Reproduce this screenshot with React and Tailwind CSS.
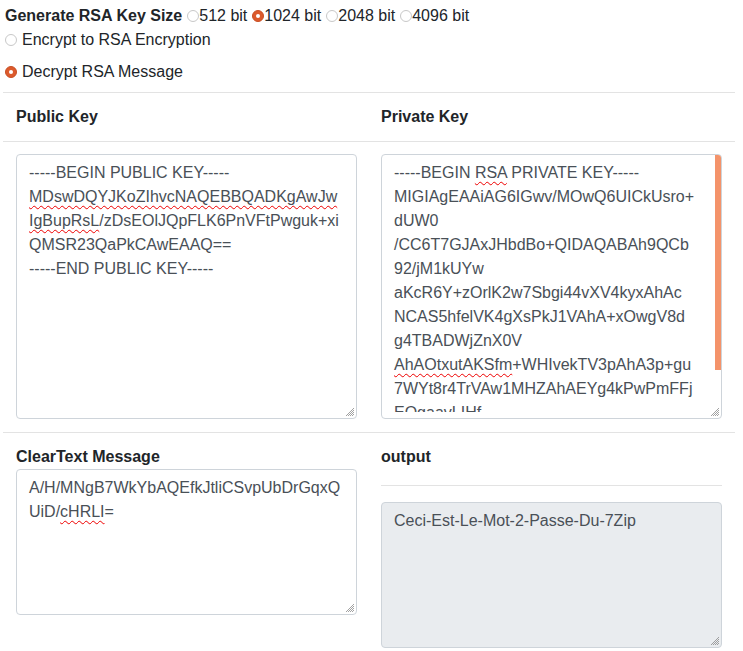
import React from "react";

function Radio({ checked, className = "" }) {
  return checked ? (
    <span className={`inline-flex items-center justify-center w-[12px] h-[12px] rounded-full bg-[#dc5a2c] border border-[#c94f24] shrink-0 ${className}`}>
      <span className="w-[4px] h-[4px] rounded-full bg-white" />
    </span>
  ) : (
    <span className={`inline-block w-[12px] h-[12px] rounded-full bg-white border border-[#c8c8c8] shrink-0 ${className}`} />
  );
}

function Grip() {
  return (
    <svg className="absolute right-[2px] bottom-[2px]" width="9" height="9" viewBox="0 0 9 9">
      <g stroke="#8a8a8a" strokeWidth="0.8">
        <line x1="9" y1="1" x2="1" y2="9" />
        <line x1="9" y1="3" x2="3" y2="9" />
        <line x1="9" y1="5" x2="5" y2="9" />
        <line x1="9" y1="7" x2="7" y2="9" />
      </g>
    </svg>
  );
}

// spellcheck squiggle
function Sq({ children }) {
  return <span className="underline decoration-wavy decoration-[#e00] decoration-1 underline-offset-[3px]">{children}</span>;
}

const privateLines = [
  <>-----BEGIN <Sq>RSA</Sq> PRIVATE KEY-----</>,
  "MIGIAgEAAiAG6IGwv/MOwQ6UICkUsro+",
  "dUW0",
  "/CC6T7GJAxJHbdBo+QIDAQABAh9QCb",
  "92/jM1kUYw",
  "aKcR6Y+zOrlK2w7Sbgi44vXV4kyxAhAc",
  "NCAS5hfelVK4gXsPkJ1VAhA+xOwgV8d",
  "g4TBADWjZnX0V",
  <><Sq>AhAOtxutAKSfm</Sq>+WHIvekTV3pAhA3p+gu</>,
  "7WYt8r4TrVAw1MHZAhAEYg4kPwPmFFj",
  "EOgaavLIHf",
  "-----END RSA PRIVATE KEY-----",
];

export default function App() {
  return (
    <div className="w-[743px] h-[651px] bg-white text-[#212529] text-[16px] leading-[24px] overflow-hidden" style={{ fontFamily: '"Liberation Sans", Arial, sans-serif' }}>
      <div className="px-[3px] w-[738px]">
        {/* options */}
        <div className="pt-[4px] pl-[2px]">
          <div className="h-[24px] flex items-center">
            <span className="font-bold">Generate RSA Key Size</span>
            <Radio className="ml-[5px]" />512 bit
            <Radio checked className="ml-[5px]" />1024 bit
            <Radio className="ml-[5px]" />2048 bit
            <Radio className="ml-[5px]" />4096 bit
          </div>
          <div className="h-[24px] flex items-center">
            <Radio className="mr-[5px]" />Encrypt to RSA Encryption
          </div>
          <div className="h-[24px] mt-[8px] flex items-center">
            <Radio checked className="mr-[5px]" />Decrypt RSA Message
          </div>
        </div>

        <div className="mt-[8px] border-t border-[#e3e3e3]" />

        <div className="px-[13px] pt-[12px] grid grid-cols-2 gap-x-[24px]">
          <div className="h-[24px] font-bold">Public Key</div>
          <div className="h-[24px] font-bold">Private Key</div>
        </div>

        <div className="mt-[12px] border-t border-[#e3e3e3]" />

        <div className="px-[13px] pt-[12px] grid grid-cols-2 gap-x-[24px]">
          <div className="relative h-[265px] border border-[#ced4da] rounded-[4px] px-[12px] py-[6px] text-[#495057] whitespace-nowrap overflow-hidden">
            <div>-----BEGIN PUBLIC KEY-----</div>
            <div><Sq>MDswDQYJKoZIhvcNAQEBBQADKgAwJw</Sq></div>
            <div><Sq>IgBupRsL</Sq>/zDsEOlJQpFLK6PnVFtPwguk+xi</div>
            <div>QMSR23QaPkCAwEAAQ==</div>
            <div>-----END PUBLIC KEY-----</div>
            <Grip />
          </div>
          <div className="relative h-[265px] border border-[#ced4da] rounded-[4px] overflow-hidden text-[#495057]">
            <div className="h-[257px] overflow-hidden whitespace-nowrap">
              <div className="px-[12px] pt-[6px]">
                {privateLines.map((l, i) => (
                  <div key={i}>{l}</div>
                ))}
              </div>
            </div>
            {/* scrollbar thumb */}
            <div className="absolute right-0 top-0 w-[6px] h-[215px] bg-[#f4936a]" />
            <Grip />
          </div>
        </div>

        <div className="mt-[13px] border-t border-[#e3e3e3]" />

        <div className="px-[13px] pt-[12px] grid grid-cols-2 gap-x-[24px] items-start">
          <div>
            <div className="h-[24px] font-bold">ClearText Message</div>
            <div className="relative h-[146px] border border-[#ced4da] rounded-[4px] px-[12px] py-[6px] text-[#495057] whitespace-nowrap overflow-hidden">
              <div>A/H/MNgB7WkYbAQEfkJtliCSvpUbDrGqxQ</div>
              <div>UiD/<Sq>cHRLI</Sq>=</div>
              <Grip />
            </div>
          </div>
          <div>
            <div className="h-[24px] font-bold">output</div>
            <div className="mt-[16px] border-t border-[#e3e3e3]" />
            <div className="relative mt-[16px] h-[146px] border border-[#ced4da] rounded-[4px] px-[12px] py-[6px] bg-[#e9ecef] text-[#495057]">
              <div>Ceci-Est-Le-Mot-2-Passe-Du-7Zip</div>
              <Grip />
            </div>
          </div>
        </div>
      </div>
    </div>
  );
}
